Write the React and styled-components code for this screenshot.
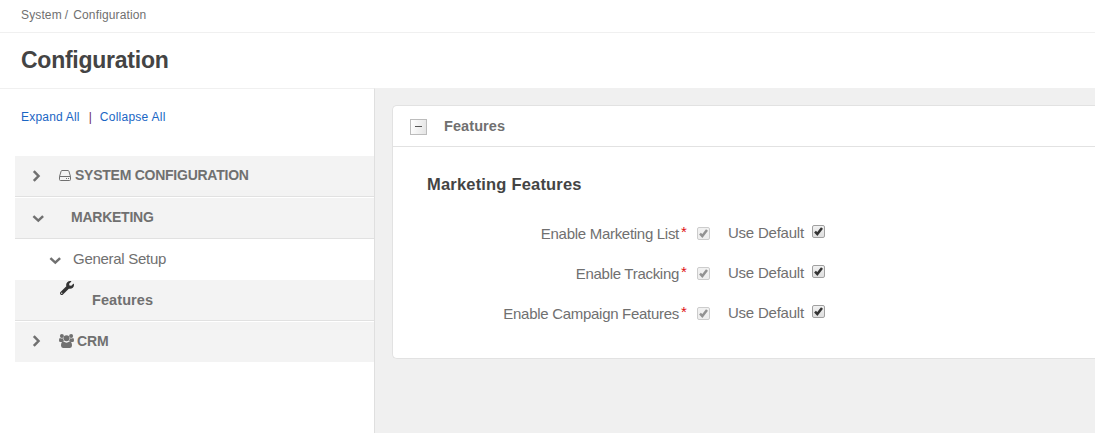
import React from "react";
import styled, { createGlobalStyle } from "styled-components";
import { FaWrench } from "react-icons/fa";

const Global = createGlobalStyle`
  * { box-sizing: border-box; }
  body { margin: 0; background: #fff; overflow: hidden; font-family: "Liberation Sans", Arial, sans-serif; color: #707070; }
`;
const Page = styled.div`
  height: 433px;
  display: flex;
  flex-direction: column;
`;
const Breadcrumb = styled.nav`
  height: 33px;
  padding: 0 21px;
  border-bottom: 1px solid #f0f0f0;
  font-size: 12px;
  line-height: 30px;
  letter-spacing: 0.13px;
  white-space: pre;
  flex: none;
`;
const Slash = styled.span`
  margin: 0 5px 0 3px;
`;
const Title = styled.h1`
  margin: 0;
  height: 55px;
  padding: 0 21px;
  font-size: 23px;
  line-height: 55px;
  letter-spacing: -0.25px;
  color: #444;
  flex: none;
`;
const Body = styled.div`
  flex: 1;
  display: flex;
  min-height: 0;
`;
const Sidebar = styled.aside`
  width: 375px;
  flex: none;
  padding-left: 15px;
  border-top: 1px solid #f0f0f0;
  border-right: 1px solid #dfdfdf;
`;
const Links = styled.div`
  display: flex;
  height: 67px;
  padding: 20px 0 0 6px;
  font-size: 12px;
  line-height: 16px;
  color: #6b1f66;
`;
const TextLink = styled.a`
  color: #1a66c4;
  letter-spacing: ${(p) => p.$track}px;
`;
const Divider = styled.span`
  margin: 0 8px 0 9px;
`;
const Item = styled.div`
  display: flex;
  align-items: center;
  height: ${(p) => (p.$line ? 41 : 40)}px;
  margin-bottom: ${(p) => p.$gap || 0}px;
  padding: 0 0 ${(p) => (p.$line ? 1 : 2)}px ${(p) => p.$indent}px;
  background: ${(p) => (p.$plain ? "#fff" : "#f3f3f3")};
  border-bottom: ${(p) => (p.$line ? "1px solid #e1e1e1" : "0")};
  font-size: ${(p) => p.$size || 14}px;
  font-weight: ${(p) => (p.$plain ? 400 : 700)};
  svg { flex: none; }
`;
const Label = styled.span`
  margin-left: ${(p) => p.$left}px;
  padding-bottom: ${(p) => p.$raise || 0}px;
  letter-spacing: ${(p) => p.$track || 0}px;
`;
const WrenchSlot = styled.span`
  display: flex;
  align-self: flex-start;
  margin-top: 1px;
  color: #333;
`;
const IconSlot = styled.span`
  display: flex;
  margin-left: ${(p) => p.$left || 0}px;
  padding-top: ${(p) => p.$drop || 0}px;
`;
const Main = styled.main`
  flex: 1;
  background: #f0f0f0;
  padding: 17px 0 0 17px;
  min-width: 0;
`;
const Panel = styled.section`
  height: 254px;
  background: #fff;
  border: 1px solid #e2e2e2;
  border-right: 0;
  border-radius: 5px 0 0 5px;
`;
const PanelHeader = styled.header`
  display: flex;
  align-items: center;
  height: 41px;
  padding-left: 17px;
  border-bottom: 1px solid #e2e2e2;
  font-size: 14.5px;
  letter-spacing: 0.08px;
  font-weight: 700;
`;
const Toggle = styled.span`
  display: flex;
  align-items: center;
  justify-content: center;
  width: 17px;
  height: 16px;
  margin: 2px 17px 0 0;
  padding-bottom: 1px;
  border: 1px solid #bcbcbc;
  background: linear-gradient(100deg, #fff, #e4e4e4);
`;
const Dash = styled.i`
  width: 7px;
  height: 1px;
  background: #555;
`;
const Heading = styled.h2`
  margin: 0;
  padding: 27px 0 0 34px;
  height: 66px;
  font-size: 16.5px;
  line-height: 20px;
  letter-spacing: 0.19px;
  color: #444;
`;
const Field = styled.div`
  display: flex;
  height: 40px;
  padding-top: 10px;
  font-size: 15px;
  line-height: 20px;
`;
const FieldLabel = styled.label`
  width: 286px;
  padding-top: 1px;
  text-align: right;
  letter-spacing: -0.29px;
  white-space: nowrap;
`;
const Star = styled.span`
  width: 7px;
  margin: -1px 9px 0 2px;
  color: #e01010;
`;
const Default = styled.span`
  margin: 0 8px 0 18px;
  width: 76px;
  white-space: nowrap;
  letter-spacing: -0.23px;
`;
const Check = styled.span`
  width: 13px;
  height: 13px;
  margin-top: ${(p) => (p.$off ? 4 : 2)}px;
  border: 1px solid ${(p) => (p.$off ? "#ccc" : "#a0a0a0")};
  border-radius: 2px;
  background: linear-gradient(#f1f1f1, ${(p) => (p.$off ? "#eee" : "#dedede")});
  color: ${(p) => (p.$off ? "#929292" : "#333")};
  svg { display: block; }
`;

const Chevron = ({ down }) => (
  <svg width="12" height="12" viewBox="0 0 12 12" fill="none" stroke="#707070" strokeWidth="2.5">
    <path d={down ? "M1.4 4.1 6.3 8.6 11.1 4.1" : "M3.8 1.2 8.5 6 3.8 10.8"} />
  </svg>
);
const Drive = () => (
  <svg width="12" height="11" viewBox="0 0 12 11" fill="none" stroke="#707070">
    <path d="M.5 6.5 2.1 1.2Q2.3.5 3 .5H9Q9.7.5 9.9 1.2L11.5 6.5V9.5Q11.5 10.5 10.5 10.5H1.5Q.5 10.5.5 9.5ZM.5 6.5H11.5" />
    <path d="M7 8.5H8M9 8.5H10" />
  </svg>
);
const People = () => (
  <svg width="15" height="14" viewBox="0 0 15 14" fill="#707070">
    <circle cx="2.9" cy="2.1" r="2" />
    <circle cx="12.1" cy="2.1" r="2" />
    <circle cx="7.5" cy="4.2" r="3" />
    <path d="M0 6.5Q0 3.8 1 4Q2.8 5.1 4 4.2Q4 6 5.2 7.1Q4 7.1 3.2 8H1.4Q0 8 0 6.5ZM15 6.5Q15 3.8 14 4Q12.2 5.1 11 4.2Q11 6 9.8 7.1Q11 7.1 11.8 8H13.6Q15 8 15 6.5ZM2 11.6Q2 7.6 4.5 7.5Q7.5 9.8 10.5 7.5Q13 7.6 13 11.6Q13 14 11 14H4Q2 14 2 11.6Z" />
  </svg>
);
const Tick = () => (
  <svg width="11" height="11" viewBox="0 0 11 11" fill="none" stroke="currentColor" strokeWidth="2.5">
    <path d="M2 5.7 4.3 8 9 2" />
  </svg>
);

const fields = ["Enable Marketing List", "Enable Tracking", "Enable Campaign Features"];

export default function App() {
  return (
    <Page>
      <Global />
      <Breadcrumb>System<Slash>/</Slash>Configuration</Breadcrumb>
      <Title>Configuration</Title>
      <Body>
        <Sidebar>
          <Links>
            <TextLink $track={0.2}>Expand All</TextLink>
            <Divider>|</Divider>
            <TextLink $track={0.25}>Collapse All</TextLink>
          </Links>
          <Item $line $gap={1} $indent={15}>
            <Chevron />
            <IconSlot $left={17}><Drive /></IconSlot>
            <Label $left={4} $track={-0.25} $raise={2}>SYSTEM CONFIGURATION</Label>
          </Item>
          <Item $line $indent={17}>
            <Chevron down />
            <Label $left={27} $track={-0.25} $raise={2}>MARKETING</Label>
          </Item>
          <Item $plain $gap={1} $size={15} $indent={34}>
            <IconSlot $drop={3}><Chevron down /></IconSlot>
            <Label $left={12} $track={-0.28}>General Setup</Label>
          </Item>
          <Item $line $gap={1} $indent={45} $size={14.5}>
            <WrenchSlot><FaWrench size={14} /></WrenchSlot>
            <Label $left={18} $track={0.08}>Features</Label>
          </Item>
          <Item $indent={15}>
            <Chevron />
            <IconSlot $left={17}><People /></IconSlot>
            <Label $left={3} $track={-0.1}>CRM</Label>
          </Item>
        </Sidebar>
        <Main>
          <Panel>
            <PanelHeader><Toggle><Dash /></Toggle>Features</PanelHeader>
            <Heading>Marketing Features</Heading>
            {fields.map((name) => (
              <Field key={name}>
                <FieldLabel>{name}</FieldLabel>
                <Star>*</Star>
                <Check $off><Tick /></Check>
                <Default>Use Default</Default>
                <Check><Tick /></Check>
              </Field>
            ))}
          </Panel>
        </Main>
      </Body>
    </Page>
  );
}
